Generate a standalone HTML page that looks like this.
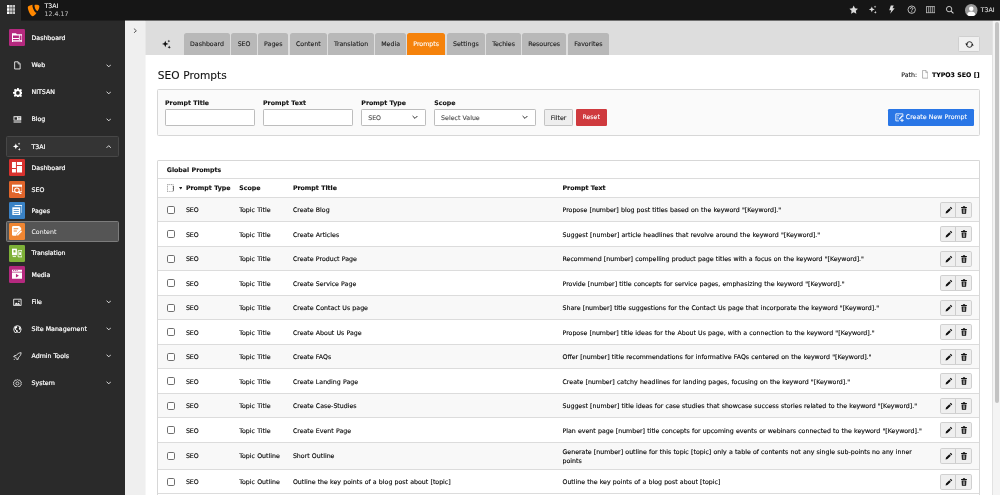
<!DOCTYPE html>
<html lang="en">
<head>
<meta charset="utf-8">
<title>SEO Prompts</title>
<style>
*{box-sizing:border-box;margin:0;padding:0}
html,body{width:1000px;height:495px;overflow:hidden;background:#fff}
body{font-family:"DejaVu Sans","Liberation Sans",sans-serif;font-size:6.25px;word-spacing:.2px;color:#111;position:relative;will-change:transform;-webkit-text-stroke-width:.1px}
.abs{position:absolute}
/* top bar */
#topbar{position:absolute;left:0;top:0;width:1000px;height:20px;background:#161616}
#toggle{position:absolute;left:0;top:0;width:21px;height:20px;background:#2a2a2a}
#site{position:absolute;left:44.5px;top:2.3px;color:#fff;font-size:6.25px;line-height:7.7px}
#site span{display:block;color:#b9b9b9}
#user{position:absolute;left:980.8px;top:4.9px;color:#e0e0e0;font-size:6.25px;line-height:9px}
.tico{position:absolute;top:4.9px;width:9.4px;height:9.4px}
/* sidebar */
#side{position:absolute;left:0;top:20px;width:125px;height:475px;background:#2a2a2a;color:#fff}
.mi{position:absolute;left:0;width:125px;height:17px}
.mi .ic{position:absolute;left:8.5px;top:-.1px;width:16.6px;height:16.9px;border-radius:1.2px}
.mi .tx{position:absolute;left:31.5px;top:0;line-height:16.6px;font-size:6.25px;color:#fff;-webkit-text-stroke:.2px #fff}
.mi .gi{position:absolute;left:12.8px;top:4.1px;width:8.8px;height:8.8px}
.mi .ch{position:absolute;left:105.5px;top:5.7px;width:5.5px;height:5.5px}
.box{position:absolute;left:6.2px;width:112.5px;border-radius:1.5px}
/* content */
#strip{position:absolute;left:125px;top:20px;width:20px;height:475px;background:#efefef}
#doc{position:absolute;left:145px;top:20px;width:847px;height:35px;background:#dddddd}
#scroll{position:absolute;left:992px;top:20px;width:7.5px;height:475px;background:#f4f4f4;border-left:.8px solid #e2e2e2}
#thumb{position:absolute;left:994.8px;top:21.5px;width:3.8px;height:381px;background:#c3c3c3;border-radius:2px}
.tab{position:absolute;top:33px;height:22px;background:#b8b8b8;border-radius:2.5px 2.5px 0 0;text-align:center;line-height:21.8px;font-size:6.25px;color:#1a1a1a}
.tab.on{background:#f5820b;color:#fff}
#refresh{position:absolute;left:958.2px;top:36.4px;width:21.6px;height:15.9px;background:#f0f0f0;border:.6px solid #cfcfcf;border-radius:1.5px}
h1{position:absolute;left:157.8px;top:68.2px;font-size:10.6px;line-height:15px;font-weight:normal;color:#111;word-spacing:.3px}
#path{position:absolute;right:20.5px;top:69.7px;font-size:6.25px;line-height:10px;white-space:nowrap;color:#111}
#path b{color:#000}
.panel{position:absolute;left:157.1px;width:822.6px;border:.7px solid #d7d7d7;border-radius:1.5px}
#filter{top:89px;height:47px;background:#fafafa}
label{position:absolute;top:97.5px;font-size:6.25px;line-height:9px;font-weight:bold;color:#111}
.inp{position:absolute;top:109px;height:17px;background:#fff;border:.7px solid #bdbdbd;border-radius:1.2px;font-size:6.25px;line-height:15.6px;padding-left:5.9px;color:#4a4a4a}
.btn{position:absolute;top:109px;height:17px;border-radius:1.2px;font-size:6.25px;line-height:15.8px;text-align:center}
#tbl{top:160.2px;height:340px;background:#fff;border-bottom:none}
#gp{position:absolute;left:166.8px;top:164.5px;font-weight:bold;font-size:6.25px;line-height:9px;color:#111}
.hl{position:absolute;left:158px;width:821px;height:.8px;background:#dcdcdc}
.row{position:absolute;left:158.2px;width:820.6px}
.row.odd{background:#f8f8f8}
.row span{position:absolute;white-space:nowrap;font-size:6.25px;line-height:9px;color:#000;-webkit-text-stroke:.12px #000}
.row .c1{left:27.7px}.row .c2{left:81.1px}.row .c3{left:134.7px}.row .c4{left:404.3px}
.th span{font-weight:bold;color:#111}
.cb{position:absolute;left:9.1px;width:7.7px;height:7.7px;border:.9px solid #6f6f6f;border-radius:1.7px;background:#fff}
.bg{position:absolute;left:781.9px;width:31.9px;height:15.9px;border:.7px solid #d0d0d0;border-radius:1.8px;background:#efefef}
.bg i{position:absolute;left:13.8px;top:0;width:.8px;height:100%;background:#cdcdcd}
.bg svg{position:absolute;top:3.2px;width:8px;height:8px}
</style>
</head>
<body>
<div id="topbar">
  <div id="toggle">
    <svg class="abs" style="left:6.6px;top:4.9px" width="8.6" height="9" viewBox="0 0 17 18" preserveAspectRatio="none"><g fill="#fff"><rect x="0" y="0" width="5" height="5.2"/><rect x="0" y="6.4" width="5" height="5.2"/><rect x="0" y="12.8" width="5" height="5.2"/></g><g fill="#c9c9c9"><rect x="6" y="0" width="5" height="5.2"/><rect x="6" y="6.4" width="5" height="5.2"/><rect x="6" y="12.8" width="5" height="5.2"/><rect x="12" y="0" width="5" height="5.2"/><rect x="12" y="6.4" width="5" height="5.2"/><rect x="12" y="12.8" width="5" height="5.2"/></g></svg>
  </div>
  <svg class="abs" style="left:26.7px;top:3.6px" width="13.1" height="13.1" viewBox="0 0 16 16"><path fill="#ff8700" d="M11.7 10.6c-.2.1-.4.1-.6.1-1.8 0-4.5-6.4-4.5-8.5 0-.8.2-1 .4-1.3C4.8 1.2 2.1 2 1.3 3c-.2.3-.300.7-.300 1.2C1 7.5 4.5 15 7 15c1.1 0 3.1-1.9 4.7-4.4M10.6 1c2.3 0 4.5.4 4.5 1.7 0 2.6-1.7 5.8-2.5 5.8-1.5 0-3.4-4.2-3.4-6.3C9.2 1.3 9.6 1 10.6 1"/></svg>
  <div id="site">T3AI<span>12.4.17</span></div>
  <!-- toolbar icons -->
  <svg class="tico" style="left:848.5px" viewBox="0 0 16 16"><path fill="#dcdcdc" d="M8 .8l2.2 4.7 5.1.7-3.7 3.6.9 5.1L8 12.5l-4.5 2.4.9-5.1L.7 6.2l5.1-.7z"/></svg>
  <svg class="tico" style="left:868.3px" viewBox="0 0 16 16"><g fill="#dcdcdc"><path d="M6.5 2.5l1.4 3.6 3.6 1.4-3.6 1.4-1.4 3.6-1.4-3.6L1.5 7.5l3.6-1.4z"/><path d="M12 1l.6 1.5 1.5.6-1.5.6L12 5.2l-.6-1.5-1.5-.6 1.5-.6z"/><path d="M12.5 10l.7 1.8 1.8.7-1.8.7-.7 1.8-.7-1.8-1.8-.7 1.8-.7z"/></g></svg>
  <svg class="tico" style="left:887.4px" viewBox="0 0 16 16"><path fill="#dcdcdc" d="M6.5 1h5l-2.2 4.5H13L5.5 15l1.7-6.2H3.8z"/></svg>
  <svg class="tico" style="left:906.5px" viewBox="0 0 16 16"><circle cx="8" cy="8" r="6.3" fill="none" stroke="#dcdcdc" stroke-width="1.4"/><path fill="none" stroke="#dcdcdc" stroke-width="1.5" d="M5.9 6.4c0-1.2.9-2 2.1-2s2.1.8 2.1 1.9c0 1.5-2.1 1.5-2.1 3.2"/><circle cx="8" cy="11.6" r=".95" fill="#dcdcdc"/></svg>
  <svg class="tico" style="left:925.9px" viewBox="0 0 16 16"><g fill="none" stroke="#c4c4c4" stroke-width="1.3"><rect x="1" y="2.8" width="14" height="10.4"/><path d="M4.6 2.8v10.4M8 2.8v10.4M11.4 2.8v10.4"/></g></svg>
  <svg class="tico" style="left:944.9px" viewBox="0 0 16 16"><circle cx="7" cy="7" r="4.6" fill="none" stroke="#dcdcdc" stroke-width="1.5"/><path stroke="#dcdcdc" stroke-width="1.8" d="M10.4 10.4l4 4"/></svg>
  <svg class="abs" style="left:965px;top:3.5px" width="12.5" height="12.5" viewBox="0 0 16 16"><circle cx="8" cy="8" r="8" fill="#9a9a9a"/><circle cx="8" cy="6" r="2.9" fill="#fff"/><path fill="#fff" d="M2.8 13.3c.5-2.6 2.5-3.7 5.2-3.7s4.7 1.1 5.2 3.7C11.9 15 10 16 8 16s-3.9-1-5.2-2.7z"/></svg>
  <div id="user">T3AI</div>
</div>

<div id="side">
  <div class="mi" style="top:9.5px"><div class="ic" style="background:#b5297f"><svg class="abs" style="left:3px;top:3.5px" width="10.5" height="9.5" viewBox="0 0 16 14"><path fill="#fff" d="M0 0h6l1.5 1.5H16V14H0z"/><path fill="#b5297f" d="M1.5 3.5h9v4h-9zM11.8 3.5h2.7v7h-2.7zM1.5 8.8h9v1.7h-9z"/><path fill="#b5297f" d="M1.5 11.6h13v1h-13z"/></svg></div><div class="tx">Dashboard</div></div>

  <div class="mi" style="top:37px"><svg class="gi" viewBox="0 0 16 16"><path fill="none" stroke="#fff" stroke-width="1.5" d="M3 1.5h6.5l3.5 3.5v9.5H3z"/><path fill="none" stroke="#fff" stroke-width="1.2" d="M9.3 1.7v3.6h3.6"/></svg><div class="tx">Web</div><svg class="ch" viewBox="0 0 10 10"><path fill="none" stroke="#fff" stroke-width="1.5" d="M1 3l4 4 4-4"/></svg></div>
  <div class="mi" style="top:64px"><svg class="gi" style="left:12.5px;top:3.6px;width:9.8px;height:9.8px" viewBox="0 0 16 16"><path fill="#fff" d="M6.7 0h2.6l.4 2.2 1.3.6 1.9-1.3 1.8 1.8-1.3 1.9.6 1.3 2.2.4v2.6l-2.2.4-.6 1.3 1.3 1.9-1.8 1.8-1.9-1.3-1.3.6L9.3 16H6.7l-.4-2.2-1.3-.6-1.9 1.3-1.8-1.8 1.3-1.9-.6-1.3L0 9.3V6.7l2.2-.4.6-1.3-1.3-1.9 1.8-1.8 1.9 1.3 1.3-.6zM8 5a3 3 0 100 6 3 3 0 000-6z"/></svg><div class="tx">NITSAN</div><svg class="ch" viewBox="0 0 10 10"><path fill="none" stroke="#fff" stroke-width="1.5" d="M1 3l4 4 4-4"/></svg></div>
  <div class="mi" style="top:91px"><svg class="gi" viewBox="0 0 16 16"><path fill="#fff" d="M1 2.5h14V10H1zM1 11h14v1H1zM1 13h14v1H1z"/><path fill="#2a2a2a" d="M2.5 4h5v4.5h-5zM9 4.5h4.5v1H9zM9 6.8h4.5v1H9z"/></svg><div class="tx">Blog</div><svg class="ch" viewBox="0 0 10 10"><path fill="none" stroke="#fff" stroke-width="1.5" d="M1 3l4 4 4-4"/></svg></div>

  <div class="box" style="top:116px;height:20.5px;background:#343434;border:.6px solid #474747"></div>
  <div class="mi" style="top:118px"><svg class="gi" style="left:12.3px;top:3.7px;width:9.4px;height:9.4px" viewBox="0 0 16 16"><g fill="#fff"><path d="M6.5 2.5l1.4 3.6 3.6 1.4-3.6 1.4-1.4 3.6-1.4-3.6L1.5 7.5l3.6-1.4z"/><path d="M12 1l.6 1.5 1.5.6-1.5.6L12 5.2l-.6-1.5-1.5-.6 1.5-.6z"/><path d="M12.5 10l.7 1.8 1.8.7-1.8.7-.7 1.8-.7-1.8-1.8-.7 1.8-.7z"/></g></svg><div class="tx" style="top:.9px">T3AI</div><svg class="ch" viewBox="0 0 10 10"><path fill="none" stroke="#fff" stroke-width="1.5" d="M1 7l4-4 4 4"/></svg></div>

  <div class="mi" style="top:139.5px"><div class="ic" style="background:#d8322f"><svg class="abs" style="left:3px;top:3px" width="10.5" height="10.5" viewBox="0 0 16 16"><path fill="#fff" d="M0 0h6v9H0zM7.5 0H16v4.5H7.5zM7.5 6H16v10H7.5zM0 10.5h6V16H0z"/></svg></div><div class="tx">Dashboard</div></div>
  <div class="mi" style="top:161px"><div class="ic" style="background:#e0652b"><svg class="abs" style="left:3px;top:3px" width="10.5" height="10.5" viewBox="0 0 16 16"><path fill="#fff" d="M0 1h16v11.5H0z"/><path fill="#e0652b" d="M1.3 4.2h13.4v7H1.3z"/><circle cx="7.5" cy="9.5" r="3.5" fill="#e0652b" stroke="#fff" stroke-width="1.6"/><path stroke="#fff" stroke-width="2.2" d="M10 12l4.5 4"/></svg></div><div class="tx" style="top:.6px">SEO</div></div>
  <div class="mi" style="top:182px"><div class="ic" style="background:#3a82c5"><svg class="abs" style="left:3px;top:3px" width="10.5" height="10.5" viewBox="0 0 16 16"><path fill="none" stroke="#fff" stroke-width="1.4" d="M4 .8h11.2V12"/><path fill="#fff" d="M.5 3.5h12V16H.5z"/><path fill="#3a82c5" d="M2.5 6h8v1.3h-8zM2.5 9h8v1.3h-8zM2.5 12h8v1.3h-8z"/></svg></div><div class="tx" style="top:.6px">Pages</div></div>
  <div class="box" style="top:201.1px;height:21.3px;background:#555555;border:.6px solid #7c7c7c"></div>
  <div class="mi" style="top:203.5px"><div class="ic" style="background:#f08632"><svg class="abs" style="left:3px;top:3px" width="10.5" height="10.5" viewBox="0 0 16 16"><path fill="#fff" d="M2 0h9l3 3v6.5L8.5 15H2a2 2 0 01-2-2V2a2 2 0 012-2z"/><path fill="#f08632" d="M2.5 3.5h7v1.4h-7zM2.5 6.8h5v1.4h-5z"/><path fill="#fff" stroke="#f08632" stroke-width=".9" d="M13.5 6.5l2 2-6 6-2.8.8.8-2.8z"/></svg></div><div class="tx" style="-webkit-text-stroke:0">Content</div></div>
  <div class="mi" style="top:224.8px"><div class="ic" style="background:#7db038"><svg class="abs" style="left:3px;top:3px" width="10.5" height="10.5" viewBox="0 0 16 16"><path fill="#fff" d="M0 1h7.5v10H0z"/><path fill="none" stroke="#fff" stroke-width="1.3" d="M9.3 4h6v9.5h-6z"/><path fill="#7db038" d="M2.3 3.3h3v3.5h-3z"/><path fill="#fff" d="M11 6.5h2.7v4H11z"/><path fill="#fff" d="M1 12.5h5v1.3H1z"/></svg></div><div class="tx" style="top:.5px">Translation</div></div>
  <div class="mi" style="top:246.2px"><div class="ic" style="background:#b5297f"><svg class="abs" style="left:3px;top:3px" width="10.5" height="10.5" viewBox="0 0 16 16"><path fill="#fff" d="M0 1h16v3H0zM0 5.3h16V15H0z"/><path fill="#b5297f" d="M1.5 2h1.7v1H1.5zM4.3 2H6v1H4.3zM7 2h1.7v1H7zM6 7.3l4.5 2.8L6 13z"/></svg></div><div class="tx" style="top:.9px">Media</div></div>

  <div class="mi" style="top:273.5px"><svg class="gi" viewBox="0 0 16 16"><path fill="none" stroke="#fff" stroke-width="1.5" d="M1.2 2.2h13.6v11.6H1.2z"/><path fill="#fff" d="M2.5 12.5l3.2-4.5 2.3 2.5 2-1.8 3.5 3.8z"/><circle cx="10.8" cy="5.8" r="1.3" fill="#fff"/></svg><div class="tx">File</div><svg class="ch" viewBox="0 0 10 10"><path fill="none" stroke="#fff" stroke-width="1.5" d="M1 3l4 4 4-4"/></svg></div>
  <div class="mi" style="top:300.5px"><svg class="gi" viewBox="0 0 16 16"><circle cx="8" cy="8" r="6.8" fill="none" stroke="#fff" stroke-width="1.5"/><path fill="#fff" d="M3 4.5l3-2.5 2 1-1 2.5-2 1 .5 2 2 .5 1.5 2-1 3-2-1.5-.5-3L3 8zM10.5 2.5l3 2.5.5 3-2 1-1.5-2 1-2z"/></svg><div class="tx">Site Management</div><svg class="ch" viewBox="0 0 10 10"><path fill="none" stroke="#fff" stroke-width="1.5" d="M1 3l4 4 4-4"/></svg></div>
  <div class="mi" style="top:327.5px"><svg class="gi" viewBox="0 0 16 16"><path fill="none" stroke="#fff" stroke-width="1.4" stroke-linejoin="round" d="M14.8 1.2c-4 .3-6.8 2-8.8 5l-3.5.5-1.3 2 3 .3 2.8 2.8.3 3 2-1.3.5-3.5c3-2 4.7-4.8 5-8.8z"/><path stroke="#fff" stroke-width="1.3" d="M1.2 14.8l2.8-2.8"/></svg><div class="tx">Admin Tools</div><svg class="ch" viewBox="0 0 10 10"><path fill="none" stroke="#fff" stroke-width="1.5" d="M1 3l4 4 4-4"/></svg></div>
  <div class="mi" style="top:354.5px"><svg class="gi" viewBox="0 0 16 16"><path fill="none" stroke="#fff" stroke-width="1.3" d="M8 1l2 1.3 2.3-.3.9 2.2 1.9 1.3-.6 2.5.6 2.5-1.9 1.3-.9 2.2-2.3-.3L8 15l-2-1.3-2.3.3-.9-2.2L.9 10.5 1.5 8 .9 5.5l1.9-1.3.9-2.2 2.3.3z"/><circle cx="8" cy="8" r="2.8" fill="none" stroke="#fff" stroke-width="1.3"/></svg><div class="tx">System</div><svg class="ch" viewBox="0 0 10 10"><path fill="none" stroke="#fff" stroke-width="1.5" d="M1 3l4 4 4-4"/></svg></div>
</div>

<div class="abs" style="left:21px;top:20px;width:979px;height:1px;background:rgba(20,20,20,.55);z-index:5"></div>
<div id="strip"><svg class="abs" style="left:8.3px;top:7.7px" width="4.5" height="5.5" viewBox="0 0 8 10"><path fill="none" stroke="#333" stroke-width="1.4" d="M1.5 1l4.5 4-4.5 4"/></svg></div>
<div id="doc"></div>
<div class="abs" style="left:145px;top:21px;width:1px;height:34px;background:#e7e7e7"></div><div class="abs" style="left:145px;top:55px;width:1px;height:440px;background:#f6f6f6"></div>
<div id="scroll"></div><div id="thumb"></div>

<svg class="abs" style="left:160.5px;top:39px" width="10.5" height="10.5" viewBox="0 0 16 16"><g fill="#111"><path d="M6.5 2.5l1.4 3.6 3.6 1.4-3.6 1.4-1.4 3.6-1.4-3.6L1.5 7.5l3.6-1.4z"/><path d="M12 1l.6 1.5 1.5.6-1.5.6L12 5.2l-.6-1.5-1.5-.6 1.5-.6z"/><path d="M12.5 10l.7 1.8 1.8.7-1.8.7-.7 1.8-.7-1.8-1.8-.7 1.8-.7z"/></g></svg>
<div class="tab" style="left:184px;width:46px">Dashboard</div>
<div class="tab" style="left:231.2px;width:25.8px">SEO</div>
<div class="tab" style="left:258.2px;width:30.2px">Pages</div>
<div class="tab" style="left:289.8px;width:37.2px">Content</div>
<div class="tab" style="left:328.2px;width:45.8px">Translation</div>
<div class="tab" style="left:375.4px;width:30.4px">Media</div>
<div class="tab on" style="left:407px;width:38.2px">Prompts</div>
<div class="tab" style="left:446.7px;width:38.3px">Settings</div>
<div class="tab" style="left:486.3px;width:34.5px">Techies</div>
<div class="tab" style="left:522px;width:44.3px">Resources</div>
<div class="tab" style="left:568px;width:40.8px">Favorites</div>
<div id="refresh"><svg class="abs" style="left:5.7px;top:2.7px" width="9" height="9" viewBox="0 0 16 16"><circle cx="8" cy="8" r="5" fill="none" stroke="#111" stroke-width="1.5"/><path fill="#f0f0f0" d="M0 6.8h5v2.4H0zM11 6.8h5v2.4h-5z"/><path fill="#111" d="M.4 6.4h5.2L3 10zM15.6 9.6h-5.2L13 6z"/></svg></div>

<h1>SEO Prompts</h1>
<div id="path">Path: <svg style="vertical-align:-1.9px;margin:0 1.8px 0 2.3px" width="6.4" height="8.6" viewBox="0 0 12 15" preserveAspectRatio="none"><path fill="#fdfdfd" stroke="#888" stroke-width="1.1" d="M1 .8h6.5L11 4.3v10H1z"/><path fill="none" stroke="#888" stroke-width="1" d="M7.3 1v3.5h3.5"/></svg> <b>TYPO3 SEO []</b></div>

<div class="panel" id="filter"></div>
<label style="left:165px">Prompt Title</label>
<label style="left:263px">Prompt Text</label>
<label style="left:361.3px">Prompt Type</label>
<label style="left:434.2px">Scope</label>
<div class="inp" style="left:165px;width:89.5px"></div>
<div class="inp" style="left:263px;width:89.5px"></div>
<div class="inp" style="left:361.3px;width:64.6px">SEO<svg class="abs" style="left:49.5px;top:5px" width="6" height="5" viewBox="0 0 10 8"><path fill="none" stroke="#222" stroke-width="1.6" d="M1 1.5l4 4 4-4"/></svg></div>
<div class="inp" style="left:434.2px;width:101.9px">Select Value<svg class="abs" style="left:87px;top:5px" width="6" height="5" viewBox="0 0 10 8"><path fill="none" stroke="#222" stroke-width="1.6" d="M1 1.5l4 4 4-4"/></svg></div>
<div class="btn" style="left:544.2px;width:28.8px;background:#eeeeee;border:.6px solid #c3c3c3;color:#222">Filter</div>
<div class="btn" style="left:575.6px;width:31.2px;background:#cf3a3e;color:#fff;line-height:16.8px">Reset</div>
<div class="btn" style="left:887.8px;width:86px;background:#2976e6;color:#fff;line-height:16.8px;text-align:left;padding-left:18px"><svg class="abs" style="left:7px;top:3.8px" width="9" height="9" viewBox="0 0 16 16"><path fill="none" stroke="#fff" stroke-width="1.5" d="M14 7V1.5H1.5V14H7"/><path fill="none" stroke="#fff" stroke-width="1.2" d="M4 4.5h3M4 7.5h2M4 10.5h2"/><path fill="#fff" d="M12.5 4l1.5 1.5-5 5.5-2 .5.5-2z"/><path stroke="#fff" stroke-width="1.6" d="M12.5 10v6M9.5 13h6"/></svg>Create New Prompt</div>

<div class="panel" id="tbl"></div>
<div id="gp">Global Prompts</div>
<div class="hl" style="top:178.2px"></div>
<div class="row th" style="top:179px;height:18px"><svg class="abs" style="left:8.7px;top:4.6px" width="7.6" height="8.3" viewBox="0 0 16 17"><path fill="none" stroke="#555" stroke-width="1.3" stroke-dasharray="2.2 1.6" d="M1 1h12v15H1z"/><path fill="#555" d="M13 4h2v10h-2z"/></svg><svg class="abs" style="left:20.5px;top:8.2px" width="3.5" height="2.5" viewBox="0 0 7 5"><path fill="#222" d="M0 0h7L3.5 5z"/></svg><span class="c1" style="top:3.6px">Prompt Type</span><span class="c2" style="top:3.6px">Scope</span><span class="c3" style="top:3.6px">Prompt Title</span><span class="c4" style="top:3.6px">Prompt Text</span></div>
<!--ROWS-->
<div class="hl" style="top:196.7px"></div>
<div class="row odd" style="top:197.5px;height:23.7px"><div class="cb" style="top:8.4px"></div><span class="c1" style="top:7.5px">SEO</span><span class="c2" style="top:7.5px">Topic Title</span><span class="c3" style="top:7.5px">Create Blog</span><span class="c4" style="top:7.5px">Propose [number] blog post titles based on the keyword "[Keyword]."</span><div class="bg" style="top:4.2px"><i></i><svg style="left:3.7px" viewBox="0 0 16 16"><path fill="#111" d="M11.5 1.5l3 3-1.8 1.8-3-3zM8.7 4.3l3 3-6.7 6.7-3.8.8.8-3.8z"/></svg><svg style="left:19px" viewBox="0 0 16 16"><path fill="#111" d="M5.8.5h4.4v1.7h3.6v2H2.2v-2h3.6zM3.2 5h9.6l-.6 10.5H3.8z"/><path fill="#efefef" d="M5.8 6.3h1.3v7.7H5.8zM8.9 6.3h1.3v7.7H8.9z"/></svg></div></div>
<div class="hl" style="top:221.2px"></div>
<div class="row" style="top:222px;height:23.7px"><div class="cb" style="top:8.4px"></div><span class="c1" style="top:7.5px">SEO</span><span class="c2" style="top:7.5px">Topic Title</span><span class="c3" style="top:7.5px">Create Articles</span><span class="c4" style="top:7.5px">Suggest [number] article headlines that revolve around the keyword "[Keyword]."</span><div class="bg" style="top:4.2px"><i></i><svg style="left:3.7px" viewBox="0 0 16 16"><path fill="#111" d="M11.5 1.5l3 3-1.8 1.8-3-3zM8.7 4.3l3 3-6.7 6.7-3.8.8.8-3.8z"/></svg><svg style="left:19px" viewBox="0 0 16 16"><path fill="#111" d="M5.8.5h4.4v1.7h3.6v2H2.2v-2h3.6zM3.2 5h9.6l-.6 10.5H3.8z"/><path fill="#efefef" d="M5.8 6.3h1.3v7.7H5.8zM8.9 6.3h1.3v7.7H8.9z"/></svg></div></div>
<div class="hl" style="top:245.7px"></div>
<div class="row odd" style="top:246.5px;height:23.7px"><div class="cb" style="top:8.4px"></div><span class="c1" style="top:7.5px">SEO</span><span class="c2" style="top:7.5px">Topic Title</span><span class="c3" style="top:7.5px">Create Product Page</span><span class="c4" style="top:7.5px">Recommend [number] compelling product page titles with a focus on the keyword "[Keyword]."</span><div class="bg" style="top:4.2px"><i></i><svg style="left:3.7px" viewBox="0 0 16 16"><path fill="#111" d="M11.5 1.5l3 3-1.8 1.8-3-3zM8.7 4.3l3 3-6.7 6.7-3.8.8.8-3.8z"/></svg><svg style="left:19px" viewBox="0 0 16 16"><path fill="#111" d="M5.8.5h4.4v1.7h3.6v2H2.2v-2h3.6zM3.2 5h9.6l-.6 10.5H3.8z"/><path fill="#efefef" d="M5.8 6.3h1.3v7.7H5.8zM8.9 6.3h1.3v7.7H8.9z"/></svg></div></div>
<div class="hl" style="top:270.2px"></div>
<div class="row" style="top:271px;height:23.7px"><div class="cb" style="top:8.4px"></div><span class="c1" style="top:7.5px">SEO</span><span class="c2" style="top:7.5px">Topic Title</span><span class="c3" style="top:7.5px">Create Service Page</span><span class="c4" style="top:7.5px">Provide [number] title concepts for service pages, emphasizing the keyword "[Keyword]."</span><div class="bg" style="top:4.2px"><i></i><svg style="left:3.7px" viewBox="0 0 16 16"><path fill="#111" d="M11.5 1.5l3 3-1.8 1.8-3-3zM8.7 4.3l3 3-6.7 6.7-3.8.8.8-3.8z"/></svg><svg style="left:19px" viewBox="0 0 16 16"><path fill="#111" d="M5.8.5h4.4v1.7h3.6v2H2.2v-2h3.6zM3.2 5h9.6l-.6 10.5H3.8z"/><path fill="#efefef" d="M5.8 6.3h1.3v7.7H5.8zM8.9 6.3h1.3v7.7H8.9z"/></svg></div></div>
<div class="hl" style="top:294.7px"></div>
<div class="row odd" style="top:295.5px;height:23.7px"><div class="cb" style="top:8.4px"></div><span class="c1" style="top:7.5px">SEO</span><span class="c2" style="top:7.5px">Topic Title</span><span class="c3" style="top:7.5px">Create Contact Us page</span><span class="c4" style="top:7.5px">Share [number] title suggestions for the Contact Us page that incorporate the keyword "[Keyword]."</span><div class="bg" style="top:4.2px"><i></i><svg style="left:3.7px" viewBox="0 0 16 16"><path fill="#111" d="M11.5 1.5l3 3-1.8 1.8-3-3zM8.7 4.3l3 3-6.7 6.7-3.8.8.8-3.8z"/></svg><svg style="left:19px" viewBox="0 0 16 16"><path fill="#111" d="M5.8.5h4.4v1.7h3.6v2H2.2v-2h3.6zM3.2 5h9.6l-.6 10.5H3.8z"/><path fill="#efefef" d="M5.8 6.3h1.3v7.7H5.8zM8.9 6.3h1.3v7.7H8.9z"/></svg></div></div>
<div class="hl" style="top:319.2px"></div>
<div class="row" style="top:320px;height:23.7px"><div class="cb" style="top:8.4px"></div><span class="c1" style="top:7.5px">SEO</span><span class="c2" style="top:7.5px">Topic Title</span><span class="c3" style="top:7.5px">Create About Us Page</span><span class="c4" style="top:7.5px">Propose [number] title ideas for the About Us page, with a connection to the keyword "[Keyword]."</span><div class="bg" style="top:4.2px"><i></i><svg style="left:3.7px" viewBox="0 0 16 16"><path fill="#111" d="M11.5 1.5l3 3-1.8 1.8-3-3zM8.7 4.3l3 3-6.7 6.7-3.8.8.8-3.8z"/></svg><svg style="left:19px" viewBox="0 0 16 16"><path fill="#111" d="M5.8.5h4.4v1.7h3.6v2H2.2v-2h3.6zM3.2 5h9.6l-.6 10.5H3.8z"/><path fill="#efefef" d="M5.8 6.3h1.3v7.7H5.8zM8.9 6.3h1.3v7.7H8.9z"/></svg></div></div>
<div class="hl" style="top:343.7px"></div>
<div class="row odd" style="top:344.5px;height:23.7px"><div class="cb" style="top:8.4px"></div><span class="c1" style="top:7.5px">SEO</span><span class="c2" style="top:7.5px">Topic Title</span><span class="c3" style="top:7.5px">Create FAQs</span><span class="c4" style="top:7.5px">Offer [number] title recommendations for informative FAQs centered on the keyword "[Keyword]."</span><div class="bg" style="top:4.2px"><i></i><svg style="left:3.7px" viewBox="0 0 16 16"><path fill="#111" d="M11.5 1.5l3 3-1.8 1.8-3-3zM8.7 4.3l3 3-6.7 6.7-3.8.8.8-3.8z"/></svg><svg style="left:19px" viewBox="0 0 16 16"><path fill="#111" d="M5.8.5h4.4v1.7h3.6v2H2.2v-2h3.6zM3.2 5h9.6l-.6 10.5H3.8z"/><path fill="#efefef" d="M5.8 6.3h1.3v7.7H5.8zM8.9 6.3h1.3v7.7H8.9z"/></svg></div></div>
<div class="hl" style="top:368.2px"></div>
<div class="row" style="top:369px;height:23.7px"><div class="cb" style="top:8.4px"></div><span class="c1" style="top:7.5px">SEO</span><span class="c2" style="top:7.5px">Topic Title</span><span class="c3" style="top:7.5px">Create Landing Page</span><span class="c4" style="top:7.5px">Create [number] catchy headlines for landing pages, focusing on the keyword "[Keyword]."</span><div class="bg" style="top:4.2px"><i></i><svg style="left:3.7px" viewBox="0 0 16 16"><path fill="#111" d="M11.5 1.5l3 3-1.8 1.8-3-3zM8.7 4.3l3 3-6.7 6.7-3.8.8.8-3.8z"/></svg><svg style="left:19px" viewBox="0 0 16 16"><path fill="#111" d="M5.8.5h4.4v1.7h3.6v2H2.2v-2h3.6zM3.2 5h9.6l-.6 10.5H3.8z"/><path fill="#efefef" d="M5.8 6.3h1.3v7.7H5.8zM8.9 6.3h1.3v7.7H8.9z"/></svg></div></div>
<div class="hl" style="top:392.7px"></div>
<div class="row odd" style="top:393.5px;height:23.7px"><div class="cb" style="top:8.4px"></div><span class="c1" style="top:7.5px">SEO</span><span class="c2" style="top:7.5px">Topic Title</span><span class="c3" style="top:7.5px">Create Case-Studies</span><span class="c4" style="top:7.5px">Suggest [number] title ideas for case studies that showcase success stories related to the keyword "[Keyword]."</span><div class="bg" style="top:4.2px"><i></i><svg style="left:3.7px" viewBox="0 0 16 16"><path fill="#111" d="M11.5 1.5l3 3-1.8 1.8-3-3zM8.7 4.3l3 3-6.7 6.7-3.8.8.8-3.8z"/></svg><svg style="left:19px" viewBox="0 0 16 16"><path fill="#111" d="M5.8.5h4.4v1.7h3.6v2H2.2v-2h3.6zM3.2 5h9.6l-.6 10.5H3.8z"/><path fill="#efefef" d="M5.8 6.3h1.3v7.7H5.8zM8.9 6.3h1.3v7.7H8.9z"/></svg></div></div>
<div class="hl" style="top:417.2px"></div>
<div class="row" style="top:418px;height:23.7px"><div class="cb" style="top:8.4px"></div><span class="c1" style="top:7.5px">SEO</span><span class="c2" style="top:7.5px">Topic Title</span><span class="c3" style="top:7.5px">Create Event Page</span><span class="c4" style="top:7.5px">Plan event page [number] title concepts for upcoming events or webinars connected to the keyword "[Keyword]."</span><div class="bg" style="top:4.2px"><i></i><svg style="left:3.7px" viewBox="0 0 16 16"><path fill="#111" d="M11.5 1.5l3 3-1.8 1.8-3-3zM8.7 4.3l3 3-6.7 6.7-3.8.8.8-3.8z"/></svg><svg style="left:19px" viewBox="0 0 16 16"><path fill="#111" d="M5.8.5h4.4v1.7h3.6v2H2.2v-2h3.6zM3.2 5h9.6l-.6 10.5H3.8z"/><path fill="#efefef" d="M5.8 6.3h1.3v7.7H5.8zM8.9 6.3h1.3v7.7H8.9z"/></svg></div></div>
<div class="hl" style="top:441.7px"></div>
<div class="row odd" style="top:442.5px;height:26.4px"><div class="cb" style="top:9.8px"></div><span class="c1" style="top:8.8px">SEO</span><span class="c2" style="top:8.8px">Topic Outline</span><span class="c3" style="top:8.8px">Short Outline</span><span class="c4" style="top:4.3px">Generate [number] outline for this topic [topic] only a table of contents not any single sub-points no any inner<br>points</span><div class="bg" style="top:5.6px"><i></i><svg style="left:3.7px" viewBox="0 0 16 16"><path fill="#111" d="M11.5 1.5l3 3-1.8 1.8-3-3zM8.7 4.3l3 3-6.7 6.7-3.8.8.8-3.8z"/></svg><svg style="left:19px" viewBox="0 0 16 16"><path fill="#111" d="M5.8.5h4.4v1.7h3.6v2H2.2v-2h3.6zM3.2 5h9.6l-.6 10.5H3.8z"/><path fill="#efefef" d="M5.8 6.3h1.3v7.7H5.8zM8.9 6.3h1.3v7.7H8.9z"/></svg></div></div>
<div class="hl" style="top:468.9px"></div>
<div class="row" style="top:469.7px;height:23.7px"><div class="cb" style="top:8.4px"></div><span class="c1" style="top:7.5px">SEO</span><span class="c2" style="top:7.5px">Topic Outline</span><span class="c3" style="top:7.5px">Outline the key points of a blog post about [topic]</span><span class="c4" style="top:7.5px">Outline the key points of a blog post about [topic]</span><div class="bg" style="top:4.2px"><i></i><svg style="left:3.7px" viewBox="0 0 16 16"><path fill="#111" d="M11.5 1.5l3 3-1.8 1.8-3-3zM8.7 4.3l3 3-6.7 6.7-3.8.8.8-3.8z"/></svg><svg style="left:19px" viewBox="0 0 16 16"><path fill="#111" d="M5.8.5h4.4v1.7h3.6v2H2.2v-2h3.6zM3.2 5h9.6l-.6 10.5H3.8z"/><path fill="#efefef" d="M5.8 6.3h1.3v7.7H5.8zM8.9 6.3h1.3v7.7H8.9z"/></svg></div></div>
<div class="hl" style="top:493.4px"></div>
<!--/ROWS-->
</body>
</html>
